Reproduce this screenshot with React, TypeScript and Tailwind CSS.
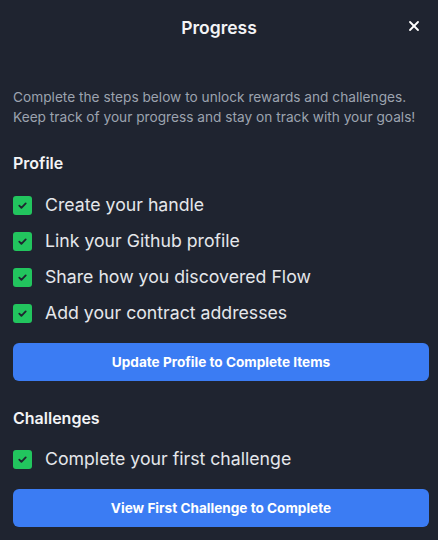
import { X } from "lucide-react";

const profileSteps = [
  "Create your handle",
  "Link your Github profile",
  "Share how you discovered Flow",
  "Add your contract addresses",
];

function CheckedItem({ label }: { label: string }) {
  return (
    <li className="flex h-9 items-center gap-[13px]">
      <span className="flex h-[19px] w-[19px] items-center justify-center rounded-[3px] bg-[#22c55e]">
        <svg viewBox="0 0 12 12" className="h-[11px] w-[11px]" fill="none" stroke="#1f2430" strokeWidth="2" strokeLinecap="round" strokeLinejoin="round">
          <path d="M2.5 6.2l2.3 2.3 4.7-4.8" />
        </svg>
      </span>
      <span className="text-[17.7px] text-[#e5e7eb]">{label}</span>
    </li>
  );
}

export default function App() {
  return (
    <div className="h-[540px] w-[438px] overflow-hidden bg-[#1f2430] font-['Inter',sans-serif]">
      <header className="relative flex h-[56px] items-center justify-center">
        <h2 className="text-[17.5px] font-semibold text-[#f3f4f6]">Progress</h2>
        <button className="absolute right-[16px] top-[18px] text-white">
          <X className="h-4 w-4" strokeWidth={2.75} />
        </button>
      </header>

      <div className="pl-[13px] pr-[9px] pt-[31px]">
        <p className="text-[13.7px] leading-5 text-[#9ca3af]">
          Complete the steps below to unlock rewards and challenges. Keep track of your progress and stay on track with
          your goals!
        </p>

        <h3 className="mt-[24px] text-[16px] font-semibold text-[#f3f4f6]">Profile</h3>
        <ul className="mt-[12px] flex flex-col">
          {profileSteps.map((s) => (
            <CheckedItem key={s} label={s} />
          ))}
        </ul>
        <button className="mt-[12px] h-[38px] w-full rounded-md bg-[#3b7cf3] text-[13.6px] font-bold text-white">
          Update Profile to Complete Items
        </button>

        <h3 className="mt-[25px] text-[16px] font-semibold text-[#f3f4f6]">Challenges</h3>
        <ul className="mt-[11px] flex flex-col">
          <CheckedItem label="Complete your first challenge" />
        </ul>
        <button className="mt-[12px] h-[38px] w-full rounded-md bg-[#3b7cf3] text-[13.6px] font-bold text-white">
          View First Challenge to Complete
        </button>
      </div>
    </div>
  );
}
